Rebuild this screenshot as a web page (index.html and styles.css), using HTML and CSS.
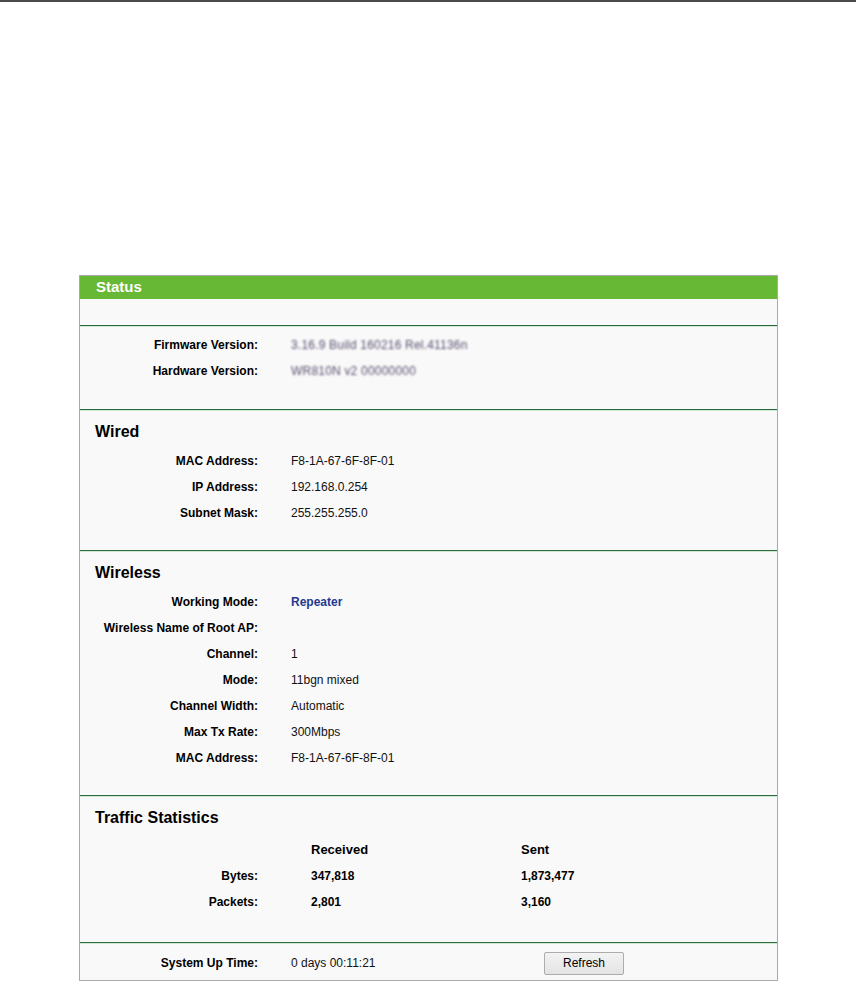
FILE: index.html
```
<!DOCTYPE html>
<html lang="en">
<head>
	<meta charset="UTF-8">
	<title>Status</title>
	<link rel="stylesheet" href="styles.css">
</head>
<body>
	<div class="topline"></div>
	<div id="wrap">
		<div class="panel">
			<div class="title">Status</div>
			<div class="blank"></div>

			<div class="section first">
				<div class="row"><span class="label">Firmware Version:</span><span class="value blur">3.16.9 Build 160216 Rel.41136n</span></div>
				<div class="row"><span class="label">Hardware Version:</span><span class="value blur">WR810N v2 00000000</span></div>
			</div>

			<div class="section">
				<h3>Wired</h3>
				<div class="row"><span class="label">MAC Address:</span><span class="value">F8-1A-67-6F-8F-01</span></div>
				<div class="row"><span class="label">IP Address:</span><span class="value">192.168.0.254</span></div>
				<div class="row"><span class="label">Subnet Mask:</span><span class="value">255.255.255.0</span></div>
			</div>

			<div class="section">
				<h3>Wireless</h3>
				<div class="row"><span class="label">Working Mode:</span><span class="value mode">Repeater</span></div>
				<div class="row"><span class="label">Wireless Name of Root AP:</span><span class="value"></span></div>
				<div class="row"><span class="label">Channel:</span><span class="value">1</span></div>
				<div class="row"><span class="label">Mode:</span><span class="value">11bgn mixed</span></div>
				<div class="row"><span class="label">Channel Width:</span><span class="value">Automatic</span></div>
				<div class="row"><span class="label">Max Tx Rate:</span><span class="value">300Mbps</span></div>
				<div class="row"><span class="label">MAC Address:</span><span class="value">F8-1A-67-6F-8F-01</span></div>
			</div>

			<div class="section traffic">
				<h3>Traffic Statistics</h3>
				<div class="row head"><span class="label"></span><span>Received</span><span>Sent</span></div>
				<div class="row"><span class="label">Bytes:</span><span>347,818</span><span>1,873,477</span></div>
				<div class="row"><span class="label">Packets:</span><span>2,801</span><span>3,160</span></div>
			</div>

			<div class="section last">
				<div class="row"><span class="label">System Up Time:</span><span class="value">0 days 00:11:21</span><button>Refresh</button></div>
			</div>
		</div>
	</div>
</body>
</html>
```
FILE: styles.css
```
body,h3{margin:0;padding:0;}
body{
	background:#fff;
	font-family:"Liberation Sans", Arial, sans-serif;
	font-size:12px;
	color:#000;
}
.topline{
	height:2px;
	background:#4a4a4a;
}
#wrap{
	padding-top:273px;
	padding-left:79px;
}
.panel{
	width:697px;
	border:1px solid #aaa;
	background:#f9f9f9;
}
.title{
	height:23px;
	line-height:21px;
	padding-left:16px;
	background:#67b834;
	color:#fff;
	font-size:15px;
	font-weight:bold;
}
.blank{
	height:26px;
}
.section{
	border-top:1px solid #2c6b3b;
	box-shadow:inset 0 1px 0 #cfe6d3;
	padding:10px 0 25px;
}
.section.first{
	padding:5px 0 26px;
}
h3{
	height:22px;
	line-height:24px;
	padding-left:15px;
	margin-bottom:5px;
	font-size:16px;
}
.row{
	display:grid;
	grid-template-columns:178px 1fr;
	column-gap:33px;
	height:26px;
	line-height:28px;
}
.label{
	text-align:right;
	font-weight:bold;
}
.value{
	color:#111;
}
.blur{
	color:#5a5070;
	filter:blur(1.2px);
	letter-spacing:0.2px;
}
.mode{
	color:#1f3a8f;
	font-weight:bold;
}
.traffic h3{
	margin-bottom:8px;
}
.traffic{
	padding-bottom:28px;
}
.traffic .row{
	grid-template-columns:178px 157px 1fr;
	column-gap:53px;
	font-weight:bold;
}
.traffic .row.head{
	font-size:13px;
}
.section.last{
	padding:7px 0 4px;
}
.last .row{
	grid-template-columns:178px 220px 80px;
	column-gap:33px;
	align-items:center;
	line-height:26px;
}
button{
	height:23px;
	width:80px;
	padding:0;
	border:1px solid #acacac;
	border-radius:2px;
	background:linear-gradient(#f3f3f3, #e3e3e3);
	font-family:"Liberation Sans", Arial, sans-serif;
	font-size:12px;
	color:#000;
	line-height:21px;
}
```
